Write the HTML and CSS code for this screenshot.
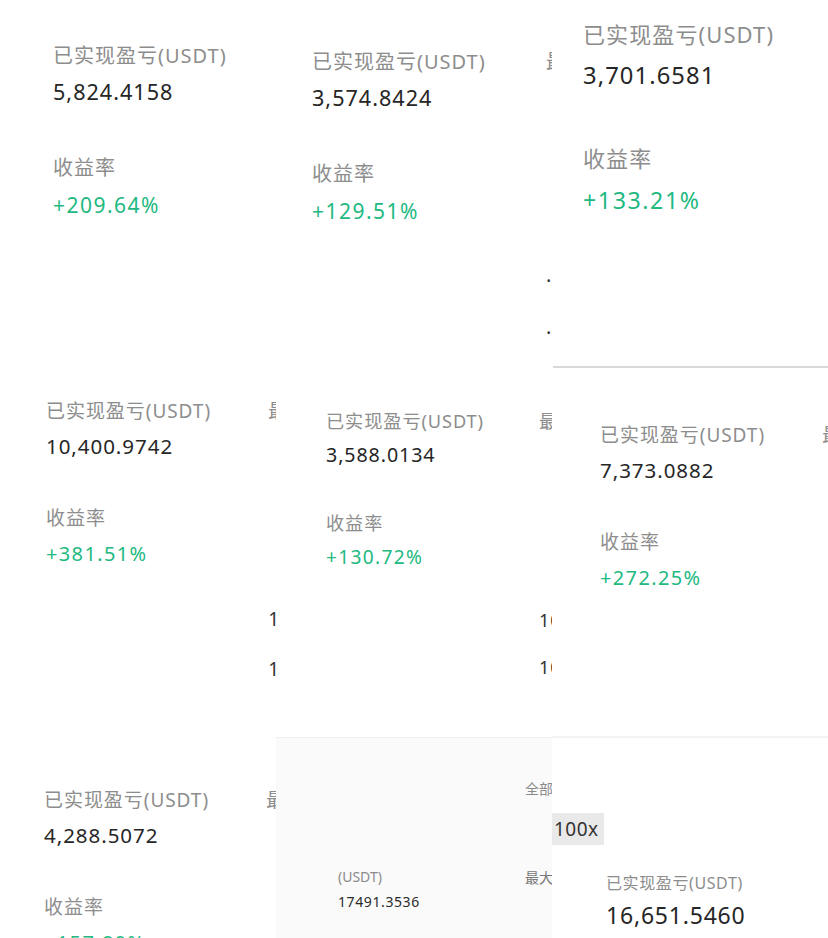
FILE: index.html
```html
<!DOCTYPE html>
<html lang="zh-CN">
<head>
    <meta charset="UTF-8">
    <meta name="viewport" content="width=device-width, initial-scale=1.0">
    <title>已实现盈亏</title>
    <link rel="stylesheet" href="styles.css">
</head>
<body>
    <div class="collage">
        <div class="col">
            <div class="tile tile-a">
                <div class="page">
                    <div class="stats">
                        <div class="row label">已实现盈亏(USDT)</div>
                        <div class="row value">5,824.4158</div>
                        <div class="row label rate-label">收益率</div>
                        <div class="row rate">+209.64%</div>
                    </div>
                    <div class="side">
                        <div class="row label">最大杠杆</div>
                    </div>
                </div>
            </div>
            <div class="tile tile-d">
                <div class="page">
                    <div class="stats">
                        <div class="row label">已实现盈亏(USDT)</div>
                        <div class="row value">10,400.9742</div>
                        <div class="row label rate-label">收益率</div>
                        <div class="row rate">+381.51%</div>
                    </div>
                    <div class="side">
                        <div class="row label">最大杠杆</div>
                        <div class="row num first">100x</div>
                        <div class="row num">100x</div>
                    </div>
                </div>
            </div>
            <div class="tile tile-g">
                <div class="page">
                    <div class="stats">
                        <div class="row label">已实现盈亏(USDT)</div>
                        <div class="row value">4,288.5072</div>
                        <div class="row label rate-label">收益率</div>
                        <div class="row rate">+157.89%</div>
                    </div>
                    <div class="side">
                        <div class="row label">最大杠杆</div>
                    </div>
                </div>
            </div>
        </div>

        <div class="col">
            <div class="tile tile-b">
                <div class="page">
                    <div class="stats">
                        <div class="row label">已实现盈亏(USDT)</div>
                        <div class="row value">3,574.8424</div>
                        <div class="row label rate-label">收益率</div>
                        <div class="row rate">+129.51%</div>
                    </div>
                    <div class="side">
                        <div class="row label">最大杠杆</div>
                        <div class="row num first">·</div>
                        <div class="row num">·</div>
                    </div>
                </div>
            </div>
            <div class="tile tile-e">
                <div class="page">
                    <div class="stats">
                        <div class="row label">已实现盈亏(USDT)</div>
                        <div class="row value">3,588.0134</div>
                        <div class="row label rate-label">收益率</div>
                        <div class="row rate">+130.72%</div>
                    </div>
                    <div class="side">
                        <div class="row label">最大杠杆</div>
                        <div class="row num first">100x</div>
                        <div class="row num">100x</div>
                    </div>
                </div>
            </div>
            <div class="tile tile-h">
                <div class="filter">
                    <div class="filter-left">
                        <div class="small-label">(USDT)</div>
                        <div class="small-value">17491.3536</div>
                    </div>
                    <div class="filter-right">
                        <div class="small-label">全部</div>
                        <div class="small-label max">最大</div>
                    </div>
                </div>
            </div>
        </div>

        <div class="col">
            <div class="tile tile-c">
                <div class="page">
                    <div class="stats">
                        <div class="row label">已实现盈亏(USDT)</div>
                        <div class="row value">3,701.6581</div>
                        <div class="row label rate-label">收益率</div>
                        <div class="row rate">+133.21%</div>
                    </div>
                </div>
            </div>
            <div class="tile tile-f">
                <div class="page">
                    <div class="stats">
                        <div class="row label">已实现盈亏(USDT)</div>
                        <div class="row value">7,373.0882</div>
                        <div class="row label rate-label">收益率</div>
                        <div class="row rate">+272.25%</div>
                    </div>
                    <div class="side">
                        <div class="row label">最大杠杆</div>
                    </div>
                </div>
            </div>
            <div class="tile tile-i">
                <span class="chip">100x</span>
                <div class="total">
                    <div class="total-label">已实现盈亏(USDT)</div>
                    <div class="total-value">16,651.5460</div>
                </div>
            </div>
        </div>
    </div>
</body>
</html>
```

FILE: styles.css
```css
body {
    margin: 0;
    background-color: #fff;
    font-family: 'Noto Sans', 'Noto Sans CJK SC', sans-serif;
    color: #222;
}

.collage {
    display: flex;
    width: 828px;
    height: 938px;
    overflow: hidden;
}

.col {
    display: flex;
    flex-direction: column;
    width: 276px;
}

.tile {
    overflow: hidden;
    flex-shrink: 0;
    background-color: #fff;
}

.page {
    display: flex;
    font-size: var(--u);
    letter-spacing: 0.05em;
}

.stats {
    width: 11.7em;
    flex-shrink: 0;
}

.side {
    flex-shrink: 0;
    width: 6em;
}

.row {
    height: 1.4em;
    display: flex;
    align-items: center;
    white-space: nowrap;
}

.label {
    color: #8d8d8d;
}

.value {
    margin-top: 0.45em;
    font-size: 1.08em;
    height: 1.3em;
    color: #262626;
}

.rate-label {
    margin-top: 2.35em;
}

.rate {
    margin-top: 0.5em;
    font-size: 1.05em;
    height: 1.33em;
    letter-spacing: 0.07em;
    color: #22b981;
}

.num {
    color: #333;
}

.num.first {
    margin-top: 9.6em;
}

.num + .num {
    margin-top: 1.2em;
}

/* each crop has its own zoom and offset */
.tile-a {
    height: 370px;
    --u: 20px;
    padding: 40px 0 0 53px;
    box-sizing: border-box;
}

.tile-b {
    height: 370px;
    --u: 20px;
    padding: 46px 0 0 36px;
    box-sizing: border-box;
}

.tile-c {
    height: 368px;
    --u: 22px;
    padding: 18px 0 0 30px;
    box-sizing: border-box;
    border-bottom: 2px solid #d9d9d9;
    margin-left: 1px;
}

.tile-d {
    height: 370px;
    --u: 19px;
    padding: 27px 0 0 46px;
    box-sizing: border-box;
}

.tile-e {
    height: 367px;
    --u: 18.2px;
    padding: 37px 0 0 50px;
    box-sizing: border-box;
}

.tile-f {
    height: 369px;
    --u: 19px;
    padding: 53px 0 0 48px;
    box-sizing: border-box;
    border-bottom: 1px solid #f3f3f3;
}

.tile-g {
    height: 198px;
    --u: 19px;
    padding: 46px 0 0 44px;
    box-sizing: border-box;
}

.tile-h {
    height: 201px;
    background-color: #fafafa;
    border-top: 1px solid #efefef;
    box-sizing: border-box;
}

.filter {
    display: grid;
    grid-template-columns: 249px 1fr;
    height: 100%;
}

.filter-left {
    padding: 129px 0 0 62px;
}

.filter-right {
    padding: 41px 0 0 0;
}

.small-label {
    font-size: 14px;
    line-height: 20px;
    color: #8a8a8a;
    white-space: nowrap;
}

.small-label.max {
    margin-top: 69px;
    color: #777;
}

.small-value {
    font-size: 14px;
    line-height: 20px;
    margin-top: 5px;
    color: #2a2a2a;
    letter-spacing: 0.6px;
}

.tile-i {
    height: 201px;
    box-sizing: border-box;
    border-top: 1px solid #f2f2f2;
    padding-top: 75px;
}

.chip {
    display: inline-block;
    background-color: #e9e9e9;
    color: #333;
    font-size: 19px;
    line-height: 32px;
    letter-spacing: 0.5px;
    padding: 0 5px 0 2px;
}

.total {
    padding: 27px 0 0 54px;
}

.total-label {
    font-size: 16px;
    line-height: 22px;
    letter-spacing: 0.6px;
    color: #8d8d8d;
}

.total-value {
    font-size: 23px;
    line-height: 32px;
    margin-top: 5px;
    letter-spacing: 0.8px;
    color: #262626;
}
```
